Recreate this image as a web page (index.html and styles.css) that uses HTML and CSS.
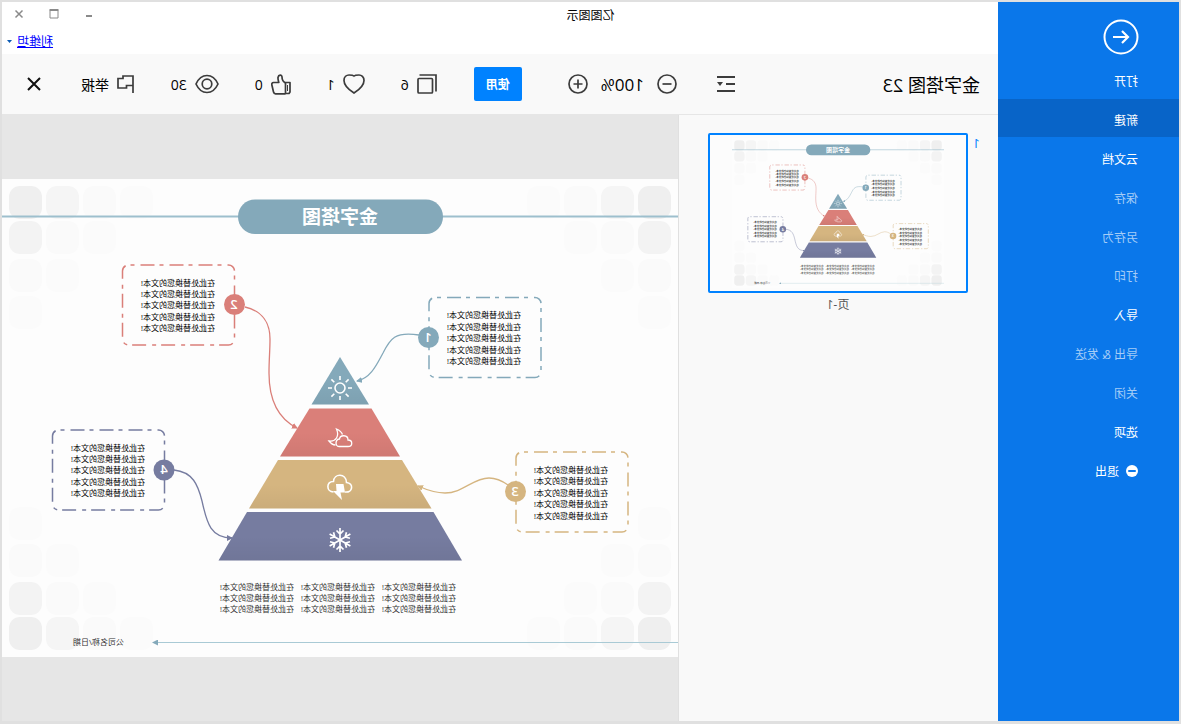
FILE: index.html
```html
<!DOCTYPE html>
<html lang="zh-CN">
<head>
<meta charset="utf-8">
<title>亿图图示</title>
<meta name="viewport" content="width=device-width, initial-scale=1">
<link rel="stylesheet" href="styles.css">
</head>
<body>
<div class="window">
  <nav class="sidebar" aria-label="文件">
    <button class="back" type="button" aria-label="返回">
      <svg width="36" height="36" viewBox="0 0 36 36" fill="none" stroke="#fff" stroke-width="2"><circle cx="18" cy="18" r="16.5"/><path d="M26 18H11M17 12l-6 6 6 6" stroke-width="2.2"/></svg>
    </button>
    <button class="item" type="button">打开</button>
    <button class="item active" type="button">新建</button>
    <button class="item" type="button">云文档</button>
    <button class="item" type="button" disabled>保存</button>
    <button class="item" type="button" disabled>另存为</button>
    <button class="item" type="button" disabled>打印</button>
    <button class="item" type="button">导入</button>
    <button class="item" type="button" disabled>导出 &amp; 发送</button>
    <button class="item" type="button" disabled>关闭</button>
    <button class="item" type="button">选项</button>
    <button class="item" type="button">
      <svg width="12" height="12" viewBox="0 0 12 12"><circle cx="6" cy="6" r="6" fill="#fff"/><rect x="2" y="5" width="8" height="2" rx="1" fill="#0a77ea"/></svg>
      退出
    </button>
  </nav>

  <main class="main">
    <header class="titlebar">
      <h1 class="app-title">亿图图示</h1>
      <div class="window-controls">
        <button type="button" aria-label="最小化"><svg width="10" height="10" viewBox="0 0 10 10"><path d="M2 7h6" stroke="#8a8a8a" stroke-width="2"/></svg></button>
        <button type="button" aria-label="最大化"><svg width="10" height="10" viewBox="0 0 10 10"><path d="M1 1.500h8v7.500h-8z" fill="none" stroke="#8a8a8a"/><path d="M.5 1h9" stroke="#8a8a8a" stroke-width="2"/></svg></button>
        <button type="button" aria-label="关闭窗口"><svg width="10" height="10" viewBox="0 0 10 10"><path d="M1.500 1.500l7 7M8.500 1.500l-7 7" stroke="#8a8a8a" stroke-width="1.500"/></svg></button>
      </div>
    </header>
    <div class="account">
      <a href="#account">利维坦</a>
      <svg width="5" height="3" viewBox="0 0 5 3"><path d="M0 0h5L2.500 3z" fill="#0a5ab4"/></svg>
    </div>

    <div class="toolbar">
      <div class="doc-head">
        <h2 class="doc-title">金字塔图 23</h2>
        <button class="icon" type="button" aria-label="收起页面列表"><svg width="18" height="18" viewBox="0 0 18 18" stroke="#3c3c3c" stroke-width="2"><path d="M0 2h18M0 9h9M0 16h18"/><path d="M12 7h6l-3 4z" fill="#3c3c3c" stroke="none"/></svg></button>
      </div>
      <div class="zoom">
        <button class="icon" type="button" aria-label="缩小"><svg width="20" height="20" viewBox="0 0 20 20" fill="none" stroke="#3c3c3c" stroke-width="1.700"><circle cx="10" cy="10" r="9"/><path d="M5.500 10h9"/></svg></button>
        <span class="zoom-value">100%</span>
        <button class="icon" type="button" aria-label="放大"><svg width="20" height="20" viewBox="0 0 20 20" fill="none" stroke="#3c3c3c" stroke-width="1.700"><circle cx="10" cy="10" r="9"/><path d="M5.500 10h9M10 5.500v9"/></svg></button>
      </div>
      <button class="use" type="button">使用</button>
      <div class="stats">
        <button class="stat" type="button"><svg width="20" height="20" viewBox="0 0 20 20" fill="none" stroke="#3c3c3c" stroke-width="1.700"><rect x="4.500" y="4.500" width="14.500" height="14.500" rx="1"/><path d="M1 17.500V1h16.500"/></svg>6</button>
        <button class="stat" type="button"><svg width="22" height="20" viewBox="0 0 22 20" fill="none" stroke="#3c3c3c" stroke-width="1.700"><path d="M11 19C7 16.500 1 12 1 6.500C1 3 3.500 1 6 1C8.500 1 10 1 11 2C12 1 13.500 1 16 1C18.500 1 21 3 21 6.500C21 12 15 16.500 11 19z"/></svg>1</button>
        <button class="stat" type="button"><svg width="20" height="21" viewBox="0 0 20 21" fill="none" stroke="#3c3c3c" stroke-width="1.700" stroke-linejoin="round"><path d="M1 8.500h4.500v11H2L1 18z"/><path d="M3.500 11v6" stroke-width="1"/><path d="M5.500 9C8.500 7.500 9 5.500 9 3C9 .5 12.500 .5 13 3.500C13.200 5.500 12.500 7 12.200 8.500H17.500C19 8.500 19.500 10 19 11.500L17.500 18C17.200 19.200 16.500 19.800 15.500 19.800H5.500"/></svg>0</button>
        <button class="stat" type="button"><svg width="24" height="20" viewBox="0 0 24 20" fill="none" stroke="#3c3c3c" stroke-width="1.700"><path d="M1 10C3.500 4.500 7 1.500 12 1.500S20.500 4.500 23 10C20.500 15.500 17 18.500 12 18.500S3.500 15.500 1 10z"/><circle cx="12" cy="10" r="4.800"/></svg>30</button>
      </div>
      <div class="actions">
        <button class="stat" type="button"><svg width="17" height="20" viewBox="0 0 17 20" fill="none" stroke="#3c3c3c" stroke-width="1.700"><path d="M1 19V2h10v2.500h5v9.500H7.500V11.500H1"/></svg>举报</button>
        <button class="icon" type="button" aria-label="关闭预览"><svg width="14" height="14" viewBox="0 0 14 14" stroke="#111" stroke-width="2"><path d="M1 1l12 12M13 1L1 13"/></svg></button>
      </div>
    </div>

    <div class="workspace">
      <aside class="pages">
        <span class="page-number">1</span>
        <figure class="page">
          <button class="thumb" type="button" aria-label="页-1"><svg viewBox="0 0 676 478"><use href="#diagram"/></svg></button>
          <figcaption>页-1</figcaption>
        </figure>
      </aside>

      <section class="canvas">
        <svg class="sheet" viewBox="0 0 676 478" role="img" aria-label="金字塔图">
          <defs>
            <linearGradient id="shade" x1="0" y1="0" x2="0" y2="1"><stop offset=".5" stop-color="#000" stop-opacity="0"/><stop offset="1" stop-color="#000" stop-opacity=".05"/></linearGradient>
            <marker id="tip-blue" viewBox="0 0 6 6" refX="5" refY="3" markerWidth="6" markerHeight="6" markerUnits="userSpaceOnUse" orient="auto"><path d="M0 0l6 3-6 3z" fill="#84a9ba"/></marker>
            <marker id="tip-red" viewBox="0 0 6 6" refX="5" refY="3" markerWidth="6" markerHeight="6" markerUnits="userSpaceOnUse" orient="auto"><path d="M0 0l6 3-6 3z" fill="#da7f79"/></marker>
            <marker id="tip-tan" viewBox="0 0 6 6" refX="5" refY="3" markerWidth="6" markerHeight="6" markerUnits="userSpaceOnUse" orient="auto"><path d="M0 0l6 3-6 3z" fill="#d5b580"/></marker>
            <marker id="tip-navy" viewBox="0 0 6 6" refX="5" refY="3" markerWidth="6" markerHeight="6" markerUnits="userSpaceOnUse" orient="auto"><path d="M0 0l6 3-6 3z" fill="#767ca0"/></marker>
            <g id="corner">
              <g fill="#efefef"><rect x="7" y="7" width="33" height="33" rx="11"/></g>
              <g fill="#f3f3f3"><rect x="7" y="42" width="33" height="33" rx="11"/></g>
              <g fill="#f5f5f5"><rect x="44" y="7" width="33" height="33" rx="11"/></g>
              <g fill="#fafafa"><rect x="81" y="7" width="33" height="33" rx="11"/><rect x="44" y="42" width="33" height="33" rx="11"/><rect x="7" y="80" width="33" height="33" rx="11"/></g>
              <g fill="#fbfbfb"><rect x="118" y="7" width="33" height="33" rx="11"/><rect x="81" y="42" width="33" height="33" rx="11"/><rect x="44" y="80" width="33" height="33" rx="11"/><rect x="7" y="117" width="33" height="33" rx="11"/></g>
            </g>
          </defs>

          <g id="diagram">
            <rect width="676" height="478" fill="#fdfdfd"/>
            <use href="#corner"/>
            <use href="#corner" transform="matrix(-1 0 0 1 676 0)"/>
            <use href="#corner" transform="matrix(1 0 0 -1 0 478)"/>
            <use href="#corner" transform="matrix(-1 0 0 -1 676 478)"/>

            <path d="M0 37.500H676" stroke="#9dbfcd" stroke-width="2"/>
            <rect x="235" y="20.500" width="205" height="34.500" rx="17" fill="#84a9ba"/>
            <text class="d-title" x="338" y="45">金字塔图</text>

            <g fill="none" stroke-width="1.300">
              <path d="M259 156C283 152 288 160 295 174C301 185 307 199 321 202" stroke="#84a9ba" marker-end="url(#tip-blue)"/>
              <path d="M433 128C415 132 408 145 408 160C408 172 409 180 409 194C409 222 399 240 381 249" stroke="#da7f79" marker-end="url(#tip-red)"/>
              <path d="M170 306C177 301 183 299 189 299C205 299 215 314 233 314C243 314 251 311 260 307" stroke="#d5b580" marker-end="url(#tip-tan)"/>
              <path d="M504 291C485 293 480 306 476 322C471 345 467 359 446 359" stroke="#767ca0" marker-end="url(#tip-navy)"/>
            </g>

            <path d="M338 178L366.500 225.500H309z" fill="#84a9ba"/>
            <path d="M306.500 229.500H368.500L398 277.500H278z" fill="#da7f79"/>
            <path d="M276 281H400L429 329.500H246.500z" fill="#d5b580"/>
            <path d="M244.500 333H431L459.500 381.500H216z" fill="#767ca0"/>
            <path d="M338 178L366.500 225.500H309z" fill="url(#shade)"/>
            <path d="M306.500 229.500H368.500L398 277.500H278z" fill="url(#shade)"/>
            <path d="M276 281H400L429 329.500H246.500z" fill="url(#shade)"/>
            <path d="M244.500 333H431L459.500 381.500H216z" fill="url(#shade)"/>

            <g fill="none" stroke="#fff" stroke-width="1.600">
              <circle cx="338" cy="209" r="5"/>
              <path d="M338 201v-4M338 217v4M330 209h-4M346 209h4M332.300 203.300l-2.900-2.900M343.700 203.300l2.900-2.900M332.300 214.700l-2.900 2.900M343.700 214.700l2.900 2.900"/>
              <path d="M330 267.500C325 267.500 325 261 330 261C330 255.500 338 255.500 338.500 260C342.500 259.500 343.500 267.500 339 267.500z" stroke-width="1.300"/>
              <path d="M335.500 255.500C336.500 253 339 251 341.500 250C338.500 257 342 263 349 262C347.500 264 345 266 342.500 266" stroke-width="1.300"/>
              <path d="M333 313C325 314 324 304 331.500 303.500C332 294 344 294 344.500 302.500C352 302 352 313 344.500 313"/>
            </g>
            <path d="M334.500 305H342L341.500 312H345L336 321L337.500 313.500H333z" fill="#fff"/>
            <g stroke="#fff" stroke-width="1.700" fill="none">
              <path d="M338 349v24M334.500 351.500l3.500 3.500 3.500-3.500M334.500 370.500l3.500-3.500 3.500 3.500"/>
              <path d="M338 349v24M334.500 351.500l3.500 3.500 3.500-3.500M334.500 370.500l3.500-3.500 3.500 3.500" transform="rotate(60 338 361)"/>
              <path d="M338 349v24M334.500 351.500l3.500 3.500 3.500-3.500M334.500 370.500l3.500-3.500 3.500 3.500" transform="rotate(120 338 361)"/>
            </g>

            <g class="d-box">
              <rect x="137" y="118.500" width="112" height="80" rx="6" stroke="#84a9ba"/>
              <rect x="443.500" y="86" width="112" height="80" rx="6" stroke="#da7f79"/>
              <rect x="50" y="273" width="112" height="80" rx="6" stroke="#d5b580"/>
              <rect x="513.500" y="251" width="112" height="80" rx="6" stroke="#767ca0"/>
            </g>
            <circle cx="249.500" cy="158.500" r="10.500" fill="#84a9ba"/>
            <circle cx="443.500" cy="125.500" r="10.500" fill="#da7f79"/>
            <circle cx="162.500" cy="312.500" r="10.500" fill="#d5b580"/>
            <circle cx="514" cy="291" r="10.500" fill="#767ca0"/>
            <g class="d-num"><text x="250" y="163">1</text><text x="444" y="130">2</text><text x="163" y="317">3</text><text x="514" y="295">4</text></g>

            <g class="d-text">
              <text><tspan x="157" y="139">在此处替换您的文本!</tspan><tspan x="157" y="151">在此处替换您的文本!</tspan><tspan x="157" y="162">在此处替换您的文本!</tspan><tspan x="157" y="174">在此处替换您的文本!</tspan><tspan x="157" y="185">在此处替换您的文本!</tspan></text>
              <text><tspan x="463" y="107">在此处替换您的文本!</tspan><tspan x="463" y="118">在此处替换您的文本!</tspan><tspan x="463" y="129">在此处替换您的文本!</tspan><tspan x="463" y="141">在此处替换您的文本!</tspan><tspan x="463" y="152">在此处替换您的文本!</tspan></text>
              <text><tspan x="70" y="294">在此处替换您的文本!</tspan><tspan x="70" y="305">在此处替换您的文本!</tspan><tspan x="70" y="317">在此处替换您的文本!</tspan><tspan x="70" y="328">在此处替换您的文本!</tspan><tspan x="70" y="340">在此处替换您的文本!</tspan></text>
              <text><tspan x="533" y="272">在此处替换您的文本!</tspan><tspan x="533" y="283">在此处替换您的文本!</tspan><tspan x="533" y="294">在此处替换您的文本!</tspan><tspan x="533" y="306">在此处替换您的文本!</tspan><tspan x="533" y="317">在此处替换您的文本!</tspan></text>
            </g>
            <g class="d-text d-notes">
              <text><tspan x="222" y="411">在此处替换您的文本!</tspan><tspan x="222" y="422">在此处替换您的文本!</tspan><tspan x="222" y="433">在此处替换您的文本!</tspan></text>
              <text><tspan x="303" y="411">在此处替换您的文本!</tspan><tspan x="303" y="422">在此处替换您的文本!</tspan><tspan x="303" y="433">在此处替换您的文本!</tspan></text>
              <text><tspan x="384" y="411">在此处替换您的文本!</tspan><tspan x="384" y="422">在此处替换您的文本!</tspan><tspan x="384" y="433">在此处替换您的文本!</tspan></text>
              <text x="554" y="466">公司名称/日期</text>
            </g>
            <path d="M0 463.500H525" stroke="#a9cad5" marker-end="url(#tip-blue)"/>
          </g>
        </svg>
      </section>
    </div>
  </main>
</div>
</body>
</html>
```
FILE: styles.css
```css
* {
  box-sizing: border-box;
}

body {
  margin: 0;
  font-family: "Open Sans", "Noto Sans CJK SC", sans-serif;
  font-size: 12px;
  color: #000;
}

button {
  margin: 0;
  padding: 0;
  border: 0;
  background: none;
  font: inherit;
  color: inherit;
}

svg {
  display: block;
  flex: none;
}

h1,
h2,
figure {
  margin: 0;
}

/* The whole interface is mirrored left to right. */
.window {
  display: flex;
  min-height: 100vh;
  border: 2px solid #e0e0e0;
  border-bottom-width: 3px;
  background: #fff;
  transform: scaleX(-1);
}

.sidebar {
  display: flex;
  flex-direction: column;
  gap: 1px;
  width: 181px;
  flex: none;
  padding-top: 17px;
  background: #0a77ea;
  color: #fff;
}

.back {
  width: 36px;
  margin: 0 0 4px 40px;
}

.item {
  display: flex;
  align-items: center;
  gap: 7px;
  height: 38px;
  padding: 4px 0 0 41px;
  text-align: left;
}

.item.active {
  background: #0864c8;
}

.item:disabled {
  color: #a5cdf7;
}

.main {
  display: flex;
  flex-direction: column;
  flex: 1;
  min-width: 0;
}

.titlebar {
  display: flex;
  align-items: center;
  height: 24px;
}

.app-title {
  flex: 1;
  padding-top: 2px;
  font-size: 12px;
  font-weight: 400;
  text-align: center;
}

.window-controls {
  display: flex;
  justify-content: flex-end;
  width: 181px;
}

.window-controls button {
  display: grid;
  place-items: center;
  width: 35px;
  height: 24px;
}

.account {
  display: flex;
  justify-content: flex-end;
  align-items: center;
  gap: 5px;
  height: 28px;
  padding: 2px 5px 0 0;
}

.account a {
  color: #00f;
}

.toolbar {
  display: flex;
  align-items: center;
  height: 61px;
  padding-right: 25px;
  border-bottom: 1px solid #e6e6e6;
  background: #f9f9f9;
}

.doc-head {
  display: flex;
  align-items: center;
  justify-content: space-between;
  width: 321px;
  flex: none;
  padding: 0 40px 0 18px;
}

.doc-title {
  font-size: 18px;
  font-weight: 400;
}

.zoom {
  display: flex;
  align-items: center;
  gap: 13px;
}

.zoom-value {
  font-size: 17px;
}

.use {
  width: 48px;
  height: 34px;
  margin: 0 37px 0 46px;
  border-radius: 2px;
  background: #0082ff;
  color: #fff;
  font-weight: 700;
}

.stats {
  display: flex;
  gap: 36px;
}

.stat {
  display: flex;
  align-items: center;
  gap: 8px;
  font-size: 14px;
}

.actions {
  display: flex;
  align-items: center;
  gap: 40px;
  margin-left: auto;
}

.workspace {
  display: flex;
  flex: 1;
}

.pages {
  display: flex;
  width: 320px;
  flex: none;
  padding: 18px 29px 18px 18px;
  border-right: 1px solid #e0e0e0;
  background: #f9f9f9;
}

.page-number {
  width: 12px;
  flex: none;
  padding-top: 1px;
  font-size: 13px;
  color: #0082ff;
}

.page {
  flex: 1;
}

.thumb {
  display: grid;
  place-items: center;
  width: 100%;
  height: 160px;
  border: 2px solid #0082ff;
  border-radius: 2px;
  background: #fcfcfc;
}

.thumb svg {
  width: 212px;
}

figcaption {
  padding-top: 2px;
  text-align: center;
  color: #555;
}

.canvas {
  display: flex;
  align-items: center;
  flex: 1;
  min-width: 0;
  background: #e6e6e6;
}

.sheet {
  width: 100%;
}

.d-title {
  fill: #fff;
  font-size: 19px;
  font-weight: 700;
  text-anchor: middle;
}

.d-box {
  fill: none;
  stroke-width: 1.5px;
  stroke-dasharray: 14 6 4 5;
  stroke-dashoffset: 13px;
}

.d-num {
  fill: #fff;
  font-size: 13px;
  font-weight: 600;
  text-anchor: middle;
}

.d-text {
  fill: #000;
  font-size: 8px;
}

.d-notes {
  fill: #333;
}
```
